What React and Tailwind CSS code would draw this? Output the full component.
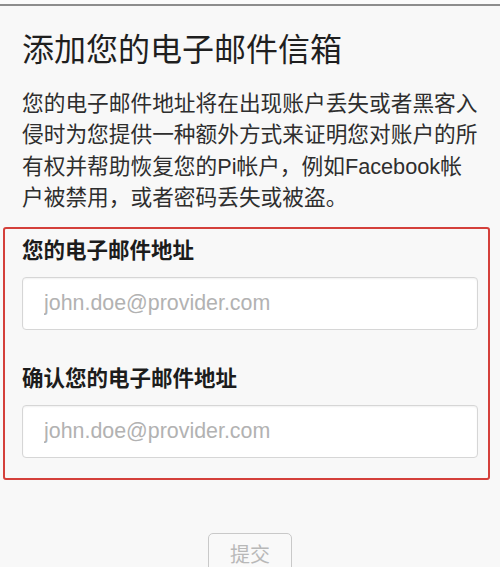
const font = { fontFamily: '"Liberation Sans", "Noto Sans CJK SC", sans-serif' };

const EmailField = ({ label, className }) => (
  <div className={className}>
    <label className="block text-[21.5px] leading-[30px] font-bold text-[#1c1c1c]">
      {label}
    </label>
    <input
      type="email"
      placeholder="john.doe@provider.com"
      className="mt-[11px] block w-[456px] h-[53px] rounded-[4px] border border-[#d6d6d6] bg-white pl-[21px] text-[21.4px] text-[#333] placeholder:text-[#b2b2b2] shadow-[inset_0_1px_2px_rgba(0,0,0,0.06)] outline-none"
    />
  </div>
);

const App = () => {
  return (
    <div
      className="w-[500px] h-[567px] overflow-hidden bg-[#f8f8f8]"
      style={font}
    >
      {/* top rule */}
      <div className="h-[4px] bg-[#fbfbfb]" />
      <div className="h-[2px] bg-[#8d8d8d]" />

      {/* Heading */}
      <h1 className="mt-[24px] pl-[22px] text-[32px] leading-[40px] font-normal text-[#1f1f1f]">
        添加您的电子邮件信箱
      </h1>

      {/* Description */}
      <p className="mt-[18px] pl-[22px] text-[21.7px] leading-[31.3px] text-[#2e2e2e] whitespace-nowrap">
        <span className="block">您的电子邮件地址将在出现账户丢失或者黑客入</span>
        <span className="block">侵时为您提供一种额外方式来证明您对账户的所</span>
        <span className="block">有权并帮助恢复您的Pi帐户，例如Facebook帐</span>
        <span className="block">户被禁用，或者密码丢失或被盗。</span>
      </p>

      {/* Email form box */}
      <div className="mt-[14px] ml-[3px] w-[487px] rounded-[3px] border-2 border-[#d4403b] pt-[7px] pb-[20px] pl-[17px]">
        <EmailField label="您的电子邮件地址" />
        <EmailField label="确认您的电子邮件地址" className="mt-[34px]" />
      </div>

      {/* Submit */}
      <div className="mt-[53px] flex justify-center">
        <button className="w-[84px] h-[44px] rounded-[5px] border border-[#c9c9c9] bg-[#f9f9f9] text-[20px] text-[#b8b8b8]">
          提交
        </button>
      </div>
    </div>
  );
};

export default App;
